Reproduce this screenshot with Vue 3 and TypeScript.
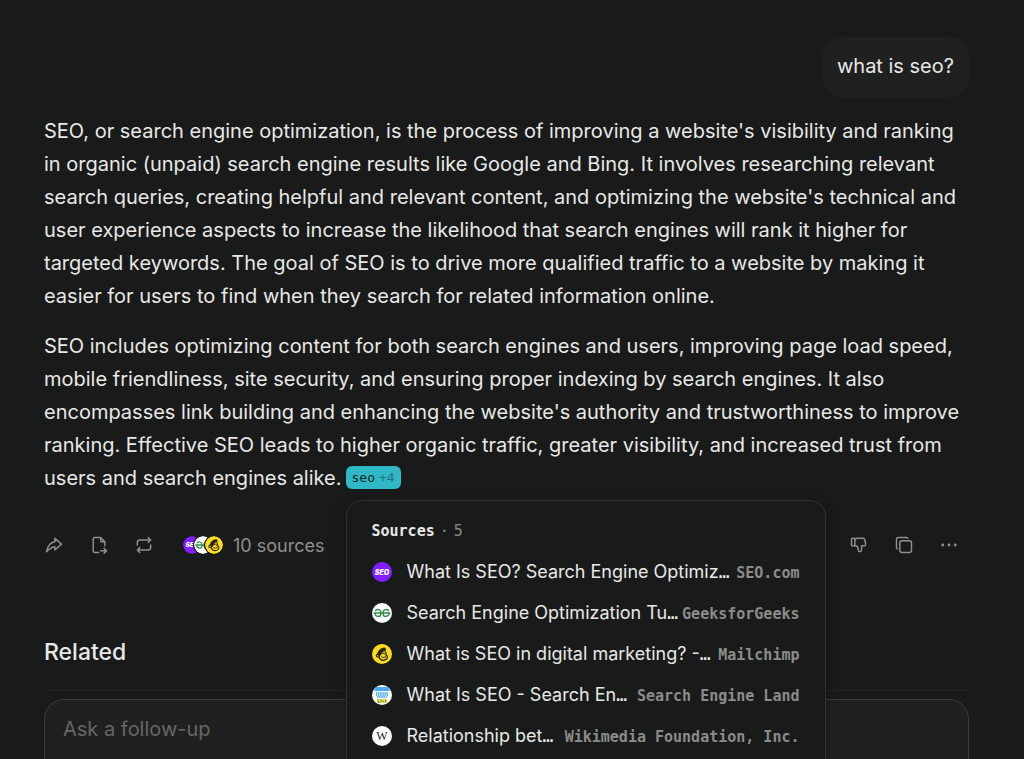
<script setup lang="ts">
import { h, ref, type FunctionalComponent } from 'vue'

type Kind = 'seo' | 'geeks' | 'chimp' | 'land' | 'wiki'

interface Source {
  kind: Kind
  title: string
  site: string
}

const disc = (fill: string) => h('circle', { cx: 10, cy: 10, r: 10, fill })
const line = (d: string, stroke: string, width: number) =>
  h('path', { d, fill: 'none', stroke, 'stroke-width': width, 'stroke-linecap': 'round' })

const glyphs = {
  seo: () => [disc('#7f1fff'), h('text', { x: 10, y: 12.5, class: 'fav-text fav-seo' }, 'SEO')],
  geeks: () => [
    disc('#ffffff'),
    line(
      'M2 10h16M3.400 7.600C5 5.600 9 6.200 9 10.200c0 2.300-1.300 3.200-2.700 3.200C4.500 13.400 3 12.200 3 10M16.600 7.600C15 5.600 11 6.200 11 10.200c0 2.300 1.300 3.200 2.700 3.200C15.500 13.400 17 12.200 17 10',
      '#2f8d46',
      1.4,
    ),
  ],
  chimp: () => [
    disc('#ffdc1c'),
    h('path', {
      d: 'M5.200 10.800C5.500 7 8.500 3.600 12.500 3.500c1.200 0 1.500.7.9 1.500 1 .3.9 1.200.2 1.700-1.300.2-2.400.6-3.200 1.800-.9 1.300-.9 2.500-2.200 3.100-.9.5-1.800.2-2.500-.1z',
      fill: '#2b2610',
    }),
    line(
      'M4.300 11.600c0-1.500 2-2.200 3-.9.9 1.300-.3 2.600-1.500 2.300-.9-.1-1.500-.6-1.500-1.400zM7 13c.8 2.300 2.700 3.600 5 3.200 2.200-.4 3.600-2.100 3.400-3.900-.2-.8-1-.8-1.200-1.500-.2-1.200-.1-2.300-1-3.100',
      '#2b2610',
      1.2,
    ),
    line('M10.300 9.500l1.600-.5M13 9.800v1M9.500 12.800c1.300 1 3.200.9 4.600-.3', '#2b2610', 1),
  ],
  land: () => [
    disc('#ffffff'),
    h('path', { d: 'M4 2h12l2 4H2z', fill: '#4aaaf2' }),
    h('path', { d: 'M4 8h12M4 10h12M5 12h10', stroke: '#2f9cee', 'stroke-width': 1.5, 'stroke-dasharray': '1.5 .6' }),
    h('rect', { x: 5, y: 14, width: 10, height: 4, fill: '#dcdc50' }),
    h('path', { d: 'M6 14.500v3h1.500M9 17.500v-2.500M11 17.500v-2.500M13.500 14.500v3', fill: 'none', stroke: '#8c9a34' }),
  ],
  wiki: () => [disc('#ffffff'), h('text', { x: 10, y: 14, class: 'fav-text fav-wiki' }, 'W')],
}

const SiteIcon: FunctionalComponent<{ kind: Kind }> = (props) =>
  h('svg', { viewBox: '0 0 20 20', 'aria-hidden': 'true' }, glyphs[props.kind]())
SiteIcon.props = ['kind']

const sources: Source[] = [
  { kind: 'seo', title: 'What Is SEO? Search Engine Optimiz', site: 'SEO.com' },
  { kind: 'geeks', title: 'Search Engine Optimization Tu', site: 'GeeksforGeeks' },
  { kind: 'chimp', title: 'What is SEO in digital marketing? -', site: 'Mailchimp' },
  { kind: 'land', title: 'What Is SEO - Search En', site: 'Search Engine Land' },
  { kind: 'wiki', title: 'Relationship bet', site: 'Wikimedia Foundation, Inc.' },
]

const stacked: Kind[] = ['seo', 'geeks', 'chimp']

const intro: string[] = [
  "SEO, or search engine optimization, is the process of improving a website's visibility and ranking",
  'in organic (unpaid) search engine results like Google and Bing. It involves researching relevant',
  "search queries, creating helpful and relevant content, and optimizing the website's technical and",
  'user experience aspects to increase the likelihood that search engines will rank it higher for',
  'targeted keywords. The goal of SEO is to drive more qualified traffic to a website by making it',
  'easier for users to find when they search for related information online.',
]

const details: string[] = [
  'SEO includes optimizing content for both search engines and users, improving page load speed,',
  'mobile friendliness, site security, and ensuring proper indexing by search engines. It also',
  "encompasses link building and enhancing the website's authority and trustworthiness to improve",
  'ranking. Effective SEO leads to higher organic traffic, greater visibility, and increased trust from',
]

const followUp = ref('')
</script>

<template>
  <main class="page">
    <div class="question-row"><p class="question">what is seo?</p></div>

    <article class="answer">
      <p><span v-for="text in intro" :key="text" class="line">{{ text }}</span></p>
      <p>
        <span v-for="text in details" :key="text" class="line">{{ text }}</span>
        <span class="line last-line">
          <span>users and search engines alike.</span>
          <span class="citation">
            <button type="button" class="chip">seo <span>+4</span></button>
            <span class="popover" role="dialog" aria-label="Sources">
              <span class="pop-title"><b>Sources</b> <span>·</span> <span>5</span></span>
              <a v-for="s in sources" :key="s.kind" href="#" class="source">
                <SiteIcon :kind="s.kind" class="favicon" />
                <span>{{ s.title }}<span class="more">…</span></span>
                <span class="site">{{ s.site }}</span>
              </a>
            </span>
          </span>
        </span>
      </p>
    </article>

    <div class="actions">
      <button type="button" class="icon" aria-label="Share">
        <svg viewBox="0 0 24 24"><path d="M13 4v4C6.425 9.028 3.980 14.788 3 20c-.037.206 5.384-5.962 10-6v4l8-7z" /></svg>
      </button>
      <button type="button" class="icon" aria-label="Export">
        <svg viewBox="0 0 24 24"><path d="M14 3v4a1 1 0 0 0 1 1h4M11.500 21H7a2 2 0 0 1-2-2V5a2 2 0 0 1 2-2h7l5 5v5M14 19h7m-3-3l3 3-3 3" /></svg>
      </button>
      <button type="button" class="icon" aria-label="Rewrite">
        <svg viewBox="0 0 24 24"><path d="M4 12V9a3 3 0 0 1 3-3h13m-3-3l3 3-3 3M20 12v3a3 3 0 0 1-3 3H4m3 3l-3-3 3-3" /></svg>
      </button>
      <button type="button" class="all-sources">
        <span class="stack"><SiteIcon v-for="k in stacked" :key="k" :kind="k" class="stacked" /></span>
        10 sources
      </button>
      <span class="spacer"></span>
      <button type="button" class="icon" aria-label="Dislike">
        <svg viewBox="0 0 24 24"><path d="M7 13V5a1 1 0 0 0-1-1H4a1 1 0 0 0-1 1v7a1 1 0 0 0 1 1h3a4 4 0 0 1 4 4v1a2 2 0 0 0 4 0v-5h3a2 2 0 0 0 2-2l-1-5a2 3 0 0 0-2-2h-7a3 3 0 0 0-3 3" /></svg>
      </button>
      <button type="button" class="icon" aria-label="Copy">
        <svg viewBox="0 0 24 24"><rect x="7" y="7" width="14" height="14" rx="2.700" /><path d="M4.012 16.737A2 2 0 0 1 3 15V5c0-1.100.900-2 2-2h10c.750 0 1.158.385 1.500 1" /></svg>
      </button>
      <button type="button" class="icon" aria-label="More">
        <svg viewBox="0 0 24 24"><g class="dots"><circle cx="4.500" cy="12" r="1.700" /><circle cx="12" cy="12" r="1.700" /><circle cx="19.500" cy="12" r="1.700" /></g></svg>
      </button>
    </div>

    <section class="related"><h2>Related</h2></section>

    <form class="composer" @submit.prevent>
      <input v-model="followUp" type="text" placeholder="Ask a follow-up" aria-label="Ask a follow-up" />
    </form>
  </main>
</template>

<style>
body {
  margin: 0;
  background: #191a1a;
}
.fav-text {
  text-anchor: middle;
}
.fav-seo {
  font: italic 900 7px Inter, sans-serif;
  fill: #fff;
}
.fav-wiki {
  font: 12px "Liberation Serif", serif;
  fill: #222;
}
</style>

<style scoped>
.page {
  box-sizing: border-box;
  height: 100vh;
  overflow: hidden;
  padding: 37px 55px 0 44px;
  background: #191a1a;
  color: #e8e8e6;
  font-family: Inter, "Liberation Sans", sans-serif;
  font-size: 20px;
}
p,
h2 {
  margin: 0;
}
button {
  padding: 0;
  border: 0;
  background: none;
  color: inherit;
  font: inherit;
  cursor: pointer;
}
.question-row {
  display: flex;
  justify-content: flex-end;
}
.question {
  padding: 13px 15px 15px;
  border-radius: 20px;
  background: #1f2121;
  line-height: 32px;
}
.answer {
  display: flex;
  flex-direction: column;
  gap: 17px;
  padding-top: 18px;
  line-height: 33px;
}
.line {
  display: block;
  white-space: nowrap;
}
.last-line {
  display: flex;
  align-items: center;
  gap: 4px;
}
.citation {
  position: relative;
  display: flex;
  margin-bottom: 2px;
}
.chip {
  display: flex;
  gap: 4px;
  height: 23px;
  padding: 0 6px;
  border-radius: 6px;
  background: #31b8c6;
  color: #15292d;
  font: 13px/23px "DejaVu Sans Mono", monospace;
}
.chip span {
  color: #227480;
}
.popover {
  position: absolute;
  z-index: 2;
  top: 34px;
  left: 0;
  box-sizing: border-box;
  display: flex;
  flex-direction: column;
  width: 480px;
  padding: 20px 25px;
  border: 1px solid #303232;
  border-radius: 16px;
  background: #191b1a;
  box-shadow: 0 4px 16px rgba(0, 0, 0, 0.2);
}
.pop-title {
  display: flex;
  gap: 5px;
  padding-bottom: 10px;
  font: 15px/20px "DejaVu Sans Mono", monospace;
}
.pop-title span {
  color: #8b8c8a;
}
.source {
  display: flex;
  align-items: center;
  height: 41px;
  color: inherit;
  font-size: 18px;
  text-decoration: none;
}
.favicon {
  flex: none;
  width: 20px;
  height: 20px;
  margin-right: 15px;
}
.more {
  font-family: "DejaVu Sans Mono", monospace;
  line-height: 20px;
}
.site {
  margin-left: auto;
  padding-top: 2px;
  color: #8b8c8a;
  font: bold 15px/20px "DejaVu Sans Mono", monospace;
}
.actions {
  display: flex;
  align-items: center;
  gap: 13px;
  height: 32px;
  margin: 34px 4px 0 -6px;
  color: #8f908e;
}
.icon {
  display: grid;
  place-items: center;
  width: 32px;
  height: 32px;
}
.icon svg {
  width: 20px;
  height: 20px;
  fill: none;
  stroke: currentColor;
  stroke-width: 1.75;
  stroke-linecap: round;
  stroke-linejoin: round;
}
.icon .dots {
  fill: currentColor;
  stroke: none;
}
.all-sources {
  display: flex;
  align-items: center;
  gap: 9px;
  margin-left: 9px;
  font-size: 18px;
}
.stack {
  display: flex;
}
.stacked {
  width: 18px;
  height: 18px;
  border: 1px solid #191a1a;
  border-radius: 50%;
  background: #191a1a;
}
.stacked + .stacked {
  margin-left: -9px;
}
.spacer {
  flex: 1;
}
.related {
  padding: 75px 0 22px;
  border-bottom: 1px solid #222424;
}
h2 {
  font-size: 23px;
  font-weight: 500;
  line-height: 32px;
}
.composer {
  height: 120px;
  margin-top: 8px;
  padding: 13px 18px;
  border: 1px solid #3b3d3d;
  border-radius: 20px;
  background: #1f2121;
}
.composer input {
  width: 100%;
  padding: 0;
  border: 0;
  outline: 0;
  background: none;
  color: inherit;
  font: 20px/32px Inter, sans-serif;
}
.composer input::placeholder {
  color: #656765;
  opacity: 1;
}
</style>
